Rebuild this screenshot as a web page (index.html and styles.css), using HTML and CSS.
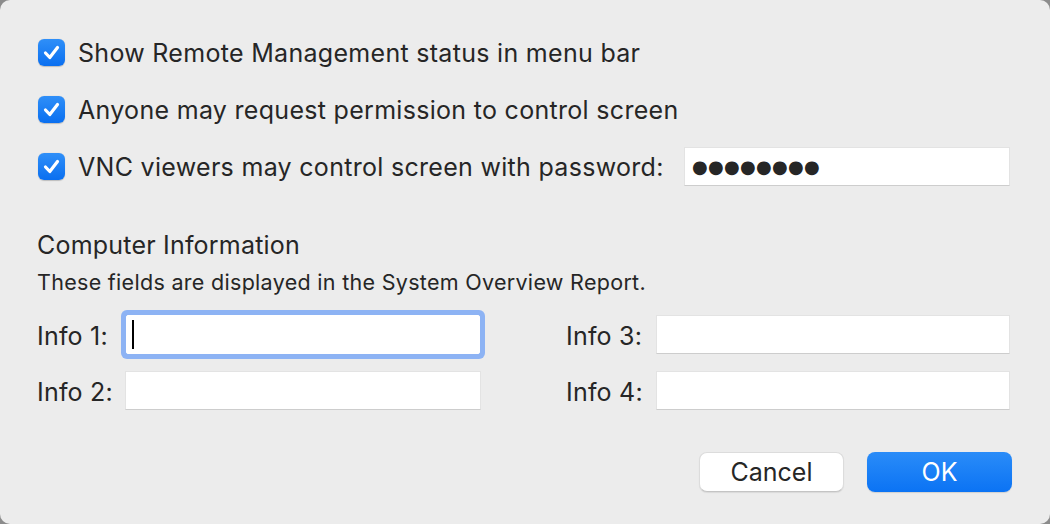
FILE: index.html
```html
<!DOCTYPE html>
<html lang="en">
<head>
<meta charset="utf-8">
<title>Remote Management</title>
<link rel="stylesheet" href="styles.css">
</head>
<body>
<div class="dialog">
  <div class="checks">
    <label class="check-row">
      <span class="checkbox"><svg viewBox="0 0 27 27" width="27" height="27"><path d="M7.5 14 L11.8 18.5 L19.5 8.5" fill="none" stroke="#fff" stroke-width="3.2" stroke-linecap="round" stroke-linejoin="round"/></svg></span>
      <span class="check-label">Show Remote Management status in menu bar</span>
    </label>
    <label class="check-row">
      <span class="checkbox"><svg viewBox="0 0 27 27" width="27" height="27"><path d="M7.5 14 L11.8 18.5 L19.5 8.5" fill="none" stroke="#fff" stroke-width="3.2" stroke-linecap="round" stroke-linejoin="round"/></svg></span>
      <span class="check-label">Anyone may request permission to control screen</span>
    </label>
    <div class="check-row">
      <span class="checkbox"><svg viewBox="0 0 27 27" width="27" height="27"><path d="M7.5 14 L11.8 18.5 L19.5 8.5" fill="none" stroke="#fff" stroke-width="3.2" stroke-linecap="round" stroke-linejoin="round"/></svg></span>
      <span class="check-label">VNC viewers may control screen with password:</span>
      <div class="field password"><span class="dots">&#9679;&#9679;&#9679;&#9679;&#9679;&#9679;&#9679;&#9679;</span></div>
    </div>
  </div>

  <div class="info">
    <div class="info-title">Computer Information</div>
    <div class="info-sub">These fields are displayed in the System Overview Report.</div>
    <div class="info-grid">
      <span class="info-label">Info 1:</span>
      <div class="field focused"><span class="caret"></span></div>
      <span class="info-label right">Info 3:</span>
      <div class="field"></div>
      <span class="info-label">Info 2:</span>
      <div class="field"></div>
      <span class="info-label right">Info 4:</span>
      <div class="field"></div>
    </div>
  </div>

  <div class="buttons">
    <button class="btn cancel">Cancel</button>
    <button class="btn ok">OK</button>
  </div>
</div>
</body>
</html>
```
FILE: styles.css
```css
html, body {
  margin: 0;
  padding: 0;
  background: #8c8c8c;
}
body {
  width: 1050px;
  height: 524px;
  overflow: hidden;
  font-family: "Inter", "Liberation Sans", sans-serif;
  color: #262626;
}
.dialog {
  box-sizing: border-box;
  width: 1050px;
  height: 524px;
  border-radius: 10px;
  background: #ececec;
  padding: 33px 40px 0 37px;
  display: flex;
  flex-direction: column;
}
.checks {
  display: flex;
  flex-direction: column;
  gap: 18px;
}
.check-row {
  display: flex;
  align-items: center;
  height: 39px;
  padding-left: 1px;
}
.checkbox {
  width: 27px;
  height: 27px;
  border-radius: 6px;
  background: linear-gradient(#2f8ff8, #0a6ff0);
  box-shadow: 0 0.5px 1px rgba(0,0,0,0.2);
  flex: none;
  display: flex;
}
.check-label {
  margin-left: 13px;
  font-size: 25px;
  letter-spacing: 0.3px;
}
.field {
  box-sizing: border-box;
  height: 39px;
  background: #fff;
  border: 1px solid #e3e3e3;
  border-bottom-color: #cdcdcd;
  display: flex;
  align-items: center;
}
.password {
  width: 326px;
  margin-left: auto;
  margin-right: 0;
}
.dots {
  font-family: "DejaVu Sans", sans-serif;
  font-size: 18px;
  letter-spacing: 0.3px;
  padding-left: 7px;
  color: #262626;
}
.info {
  margin-top: 44px;
}
.info-title {
  font-size: 25px;
  line-height: 30px;
  letter-spacing: 0.2px;
}
.info-sub {
  font-size: 21.5px;
  line-height: 26px;
  margin-top: 9px;
  letter-spacing: 0.3px;
}
.info-grid {
  margin-top: 20px;
  display: grid;
  grid-template-columns: 88px 356px 85px 90px 354px;
  grid-auto-rows: 39px;
  row-gap: 17px;
  align-items: center;
}
.info-label {
  font-size: 25px;
  letter-spacing: 0.2px;
  padding-top: 3px;
}
.info-label.right {
  grid-column: 4;
}
.focused {
  border-color: #fff;
  border-radius: 2px;
  box-shadow: 0 0 0 1px #8db3f4, 0 0 0 5px #8db3f4;
  margin: -1px 1px 0 1px;
}
.caret {
  width: 2px;
  height: 29px;
  background: #000;
  margin-left: 5px;
}
.buttons {
  margin-top: auto;
  margin-bottom: 32px;
  display: flex;
  justify-content: flex-end;
  gap: 23px;
  margin-right: -2px;
}
.btn {
  width: 145px;
  height: 40px;
  border-radius: 8px;
  font-family: "Inter", "Liberation Sans", sans-serif;
  font-size: 25px;
  padding: 0;
  cursor: default;
}
.cancel {
  background: #fff;
  color: #262626;
  border: 1px solid #dcdcdc;
  border-bottom-color: #c4c4c4;
  box-shadow: 0 1px 1px rgba(0,0,0,0.08);
}
.ok {
  background: linear-gradient(#2a8cf8, #0b73f4);
  color: #fff;
  border: none;
  box-shadow: 0 1px 1px rgba(0,0,0,0.12);
}
```
